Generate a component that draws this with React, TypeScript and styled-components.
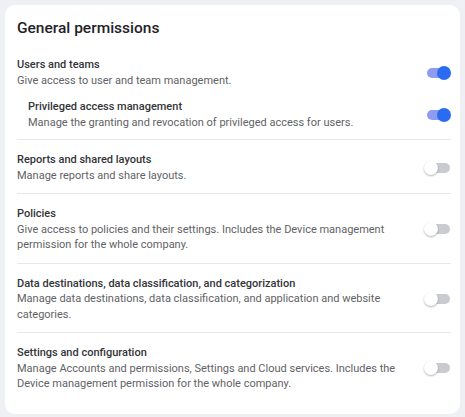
import React from 'react'
import styled, { createGlobalStyle } from 'styled-components'

const Global = createGlobalStyle`
  html, body { margin: 0; padding: 0; background: #eef0f3; }
  body { font-family: Roboto, Inter, "Noto Sans", sans-serif; -webkit-font-smoothing: antialiased; }
`

const Page = styled.div`padding: 5px;`

const Card = styled.div`
  background: #fff;
  border-radius: 10px;
  padding: 12px 9px 12px 12px;
  min-height: 384px;
`

const Heading = styled.h2`
  margin: 0 0 18px;
  font-size: 15.5px;
  line-height: 22px;
  font-weight: 500;
  color: #1f2329;
`

const Section = styled.div<{ $first?: boolean }>`
  border-top: ${p => (p.$first ? 'none' : '1px solid #e7e8eb')};
  padding: ${p => (p.$first ? '0 0 9px' : '12px 0 10px')};
  display: flex;
  flex-direction: column;
  gap: 11px;
`

const Row = styled.div<{ $nested?: boolean }>`
  display: flex;
  align-items: center;
  padding-left: ${p => (p.$nested ? '11px' : '0')};
`

const Text = styled.div`
  flex: 1;
  padding-right: 15px;
`

const Title = styled.div`
  font-size: 11px;
  line-height: 15.5px;
  font-weight: 500;
  color: #333539;
`

const Desc = styled.div`
  font-size: 11px;
  line-height: 15.5px;
  color: #5f6266;
`

const Switch = styled.div<{ $on?: boolean }>`
  position: relative;
  width: 27px;
  height: 14px;
  flex-shrink: 0;
  &::before {
    content: '';
    position: absolute;
    top: 2px;
    left: ${p => (p.$on ? '3px' : '5px')};
    width: 21px;
    height: 10px;
    border-radius: 5px;
    background: ${p => (p.$on ? '#8d9bf1' : '#c9cbd0')};
  }
  &::after {
    content: '';
    position: absolute;
    top: 0;
    left: ${p => (p.$on ? '13px' : '0')};
    width: 14px;
    height: 14px;
    border-radius: 50%;
    background: ${p => (p.$on ? '#2a6cf0' : '#fff')};
    box-shadow: ${p => (p.$on ? 'none' : '0 1px 2px rgba(0,0,0,0.3)')};
  }
`

type Perm = { title: string; desc: string; on?: boolean; nested?: boolean }

const groups: Perm[][] = [
  [
    { title: 'Users and teams', desc: 'Give access to user and team management.', on: true },
    { title: 'Privileged access management', desc: 'Manage the granting and revocation of privileged access for users.', on: true, nested: true },
  ],
  [{ title: 'Reports and shared layouts', desc: 'Manage reports and share layouts.' }],
  [{ title: 'Policies', desc: 'Give access to policies and their settings. Includes the Device management permission for the whole company.' }],
  [{ title: 'Data destinations, data classification, and categorization', desc: 'Manage data destinations, data classification, and application and website categories.' }],
  [{ title: 'Settings and configuration', desc: 'Manage Accounts and permissions, Settings and Cloud services. Includes the Device management permission for the whole company.' }],
]

export default function App() {
  return (
    <Page>
      <Global />
      <Card>
        <Heading>General permissions</Heading>
        {groups.map((g, i) => (
          <Section key={i} $first={i === 0}>
            {g.map(p => (
              <Row key={p.title} $nested={p.nested}>
                <Text>
                  <Title>{p.title}</Title>
                  <Desc>{p.desc}</Desc>
                </Text>
                <Switch $on={p.on} />
              </Row>
            ))}
          </Section>
        ))}
      </Card>
    </Page>
  )
}
